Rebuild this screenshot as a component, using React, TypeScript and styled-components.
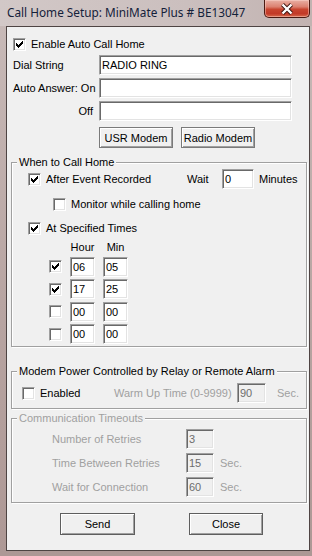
import styled, { createGlobalStyle } from "styled-components";

const GlobalStyle = createGlobalStyle`
  html, body { margin: 0; padding: 0; background: #b7a4a1; }
  body {
    font-family: "Liberation Sans", Arial, sans-serif;
    font-size: 11px;
    color: #000;
  }
  * { box-sizing: border-box; }
`;

const CHECK_COLS = [2, 3, 4, 3, 2, 1, 0];

function Check({ checked }: { checked?: boolean }) {
  return (
    <Box>
      {checked && (
        <svg width="7" height="7" viewBox="0 0 7 7" shapeRendering="crispEdges">
          {CHECK_COLS.map((y, x) => (
            <rect key={x} x={x} y={y} width="1" height="3" fill="#000" />
          ))}
        </svg>
      )}
    </Box>
  );
}

const times = [
  { on: true, h: "06", m: "05" },
  { on: true, h: "17", m: "25" },
  { on: false, h: "00", m: "00" },
  { on: false, h: "00", m: "00" },
];

const timeouts = [
  { label: "Number of Retries", value: "3", unit: "" },
  { label: "Time Between Retries", value: "15", unit: "Sec." },
  { label: "Wait for Connection", value: "60", unit: "Sec." },
];

export default function App() {
  return (
    <>
      <GlobalStyle />
      <Window>
        <TitleBar>
          <TitleText>Call Home Setup: MiniMate Plus # BE13047</TitleText>
          <CloseBtn>
            <svg width="14" height="12" viewBox="0 0 14 12">
              <path d="M2.5 1.5 L11.5 10.5 M11.5 1.5 L2.5 10.5" stroke="#3b1510" strokeWidth="4.2" />
              <path d="M2.5 1.5 L11.5 10.5 M11.5 1.5 L2.5 10.5" stroke="#fff" strokeWidth="2.4" />
            </svg>
          </CloseBtn>
        </TitleBar>

        <Client>
          <CheckItem $ml={6}>
            <Check checked />
            <span>Enable Auto Call Home</span>
          </CheckItem>

          <FieldGrid>
            <FieldLabel>Dial String</FieldLabel>
            <Edit defaultValue="RADIO RING" />
            <FieldLabel $right>Auto Answer: On</FieldLabel>
            <Edit defaultValue="" />
            <FieldLabel $right>Off</FieldLabel>
            <Edit defaultValue="" />
            <ButtonRow>
              <Button>USR Modem</Button>
              <Button>Radio Modem</Button>
            </ButtonRow>
          </FieldGrid>

          <Group $mt={7.5}>
            <Legend>When to Call Home</Legend>
            <GroupBody $pad="0.5px 0 2px 16px">
              <Row>
                <CheckItem $w={159}>
                  <Check checked />
                  <span>After Event Recorded</span>
                </CheckItem>
                <Text $w={35}>Wait</Text>
                <Edit $w={32} defaultValue="0" />
                <Text $ml={5}>Minutes</Text>
              </Row>
              <Row $mt={8.5} $pl={25}>
                <CheckItem>
                  <Check />
                  <span>Monitor while calling home</span>
                </CheckItem>
              </Row>
              <Row $mt={11.5}>
                <CheckItem>
                  <Check checked />
                  <span>At Specified Times</span>
                </CheckItem>
              </Row>
              <TimesGrid>
                <span />
                <ColHead>Hour</ColHead>
                <ColHead>Min</ColHead>
                {times.map((t, i) => (
                  <TimeRow key={i}>
                    <Check checked={t.on} />
                    <Edit $w={25} defaultValue={t.h} />
                    <Edit $w={25} defaultValue={t.m} />
                  </TimeRow>
                ))}
              </TimesGrid>
            </GroupBody>
          </Group>

          <Group $mt={17.5}>
            <Legend>Modem Power Controlled by Relay or Remote Alarm</Legend>
            <GroupBody $pad="5.5px 0 5px 10px">
              <Row>
                <CheckItem $w={92}>
                  <Check />
                  <span>Enabled</span>
                </CheckItem>
                <Text $w={123} $dim>Warm Up Time (0-9999)</Text>
                <Edit $w={29} $disabled readOnly defaultValue="90" />
                <Text $ml={11} $dim>Sec.</Text>
              </Row>
            </GroupBody>
          </Group>

          <Group $mt={3}>
            <Legend $dim>Communication Timeouts</Legend>
            <GroupBody $pad="3.5px 0 5px 40px">
              {timeouts.map((t, i) => (
                <Row key={i} $mt={i ? 4 : 0}>
                  <Text $w={134} $dim>{t.label}</Text>
                  <Edit $w={28} $disabled readOnly defaultValue={t.value} />
                  <Text $ml={6} $dim>{t.unit}</Text>
                </Row>
              ))}
            </GroupBody>
          </Group>

          <Footer>
            <Button $w={75} $h={22} $strong>Send</Button>
            <Button $w={74} $h={22} $strong>Close</Button>
          </Footer>
        </Client>
      </Window>
    </>
  );
}

const Window = styled.div`
  width: 312px;
  height: 556px;
  display: flex;
  flex-direction: column;
  background: linear-gradient(180deg, #d3c9c8 0px, #c7b9b7 26px, #b8a5a2 300px, #ad9895 100%);
`;

const TitleBar = styled.div`
  height: 26px;
  display: flex;
  align-items: flex-start;
  background: linear-gradient(90deg, #d2c8c7 0%, #cbbfbe 60%, #c2b3b1 100%);
`;

const TitleText = styled.div`
  padding: 5px 0 0 7px;
  font-family: "Noto Sans", "Open Sans", sans-serif;
  font-size: 11.8px;
  line-height: 15px;
  color: #14213a;
  white-space: nowrap;
`;

const CloseBtn = styled.div`
  margin-left: auto;
  margin-right: 2px;
  width: 46px;
  height: 18px;
  border: 1px solid #4a1a12;
  border-top: none;
  border-radius: 0 0 5px 5px;
  background: linear-gradient(180deg, #e9b0a4 0%, #dc8170 40%, #c8452f 55%, #c23a28 80%, #d86a4c 100%);
  box-shadow: inset 0 0 0 1px rgba(255, 220, 210, 0.45);
  display: flex;
  align-items: center;
  justify-content: center;
`;

const Client = styled.div`
  flex: 1;
  margin: 0 2px 5px 6px;
  border: 1px solid #4e4443;
  background: #f0f0f0;
  padding-top: 11px;
  display: flex;
  flex-direction: column;
`;

const Box = styled.span`
  width: 13px;
  height: 13px;
  flex: none;
  background: #fff;
  border-top: 1px solid #a0a0a0;
  border-left: 1px solid #a0a0a0;
  border-right: 1px solid #fff;
  border-bottom: 1px solid #fff;
  box-shadow: inset 1px 1px 0 #696969, inset -1px -1px 0 #e3e3e3;
  display: flex;
  align-items: center;
  justify-content: center;
`;

const CheckItem = styled.div<{ $w?: number; $ml?: number }>`
  display: flex;
  align-items: center;
  gap: 5px;
  height: 13px;
  line-height: 13px;
  white-space: nowrap;
  flex: none;
  width: ${(p) => (p.$w ? `${p.$w}px` : "auto")};
  margin-left: ${(p) => p.$ml ?? 0}px;
`;

const FieldGrid = styled.div`
  display: grid;
  grid-template-columns: 80px 193px;
  column-gap: 6px;
  row-gap: 3px;
  align-items: center;
  margin: 4px 0 0 6px;
`;

const FieldLabel = styled.span<{ $right?: boolean }>`
  text-align: ${(p) => (p.$right ? "right" : "left")};
  white-space: nowrap;
`;

const Edit = styled.input<{ $w?: number; $disabled?: boolean }>`
  width: ${(p) => (p.$w ? `${p.$w}px` : "100%")};
  height: 20px;
  margin: 0;
  padding: 0 0 0 2px;
  flex: none;
  font-family: inherit;
  font-size: 11px;
  color: ${(p) => (p.$disabled ? "#6d6d6d" : "#000")};
  background: ${(p) => (p.$disabled ? "#f0f0f0" : "#fff")};
  border-top: 1px solid #a0a0a0;
  border-left: 1px solid #a0a0a0;
  border-right: 1px solid #fff;
  border-bottom: 1px solid #fff;
  box-shadow: inset 1px 1px 0 #696969, inset -1px -1px 0 #e3e3e3;
  outline: none;
`;

const ButtonRow = styled.div`
  grid-column: 2;
  display: flex;
  gap: 8px;
  margin-top: 3px;
`;

const Button = styled.button<{ $w?: number; $h?: number; $strong?: boolean }>`
  width: ${(p) => p.$w ?? 74}px;
  height: ${(p) => p.$h ?? 21}px;
  padding: 0;
  font-family: inherit;
  font-size: 11px;
  color: #000;
  background: #f0f0f0;
  border: 1px solid ${(p) => (p.$strong ? "#5e5e5e" : "#7a7a7a")};
  box-shadow: inset 1px 1px 0 #fff, inset -1px -1px 0 #a0a0a0;
`;

const Group = styled.fieldset<{ $mt: number }>`
  margin: ${(p) => p.$mt}px 2px 0 4px;
  padding: 0;
  min-width: 0;
  border: 1px solid #a0a0a0;
  box-shadow: inset 1px 1px 0 #fff, 1px 1px 0 #fff;
`;

const Legend = styled.legend<{ $dim?: boolean }>`
  margin-left: 5px;
  padding: 0 2px;
  line-height: 13px;
  font-size: 11px;
  color: ${(p) => (p.$dim ? "#a0a0a0" : "#000")};
  background: #f0f0f0;
`;

const GroupBody = styled.div<{ $pad: string }>`
  padding: ${(p) => p.$pad};
  display: flex;
  flex-direction: column;
`;

const Row = styled.div<{ $mt?: number; $pl?: number }>`
  display: flex;
  align-items: center;
  margin-top: ${(p) => p.$mt ?? 0}px;
  padding-left: ${(p) => p.$pl ?? 0}px;
  white-space: nowrap;
`;

const Text = styled.span<{ $w?: number; $ml?: number; $dim?: boolean }>`
  flex: none;
  width: ${(p) => (p.$w ? `${p.$w}px` : "auto")};
  margin-left: ${(p) => p.$ml ?? 0}px;
  color: ${(p) => (p.$dim ? "#a0a0a0" : "#000")};
  white-space: nowrap;
`;

const TimesGrid = styled.div`
  display: grid;
  grid-template-columns: 13px 25px 25px;
  grid-template-rows: 13px;
  grid-auto-rows: 20px;
  column-gap: 8px;
  row-gap: 2.5px;
  align-items: center;
  margin: 6px 0 0 21px;
`;

const TimeRow = styled.div`
  display: contents;
`;

const ColHead = styled.span`
  text-align: center;
  line-height: 13px;
  margin-bottom: 1px;
`;

const Footer = styled.div`
  display: flex;
  gap: 54px;
  margin: 10px 0 0 53px;
`;
